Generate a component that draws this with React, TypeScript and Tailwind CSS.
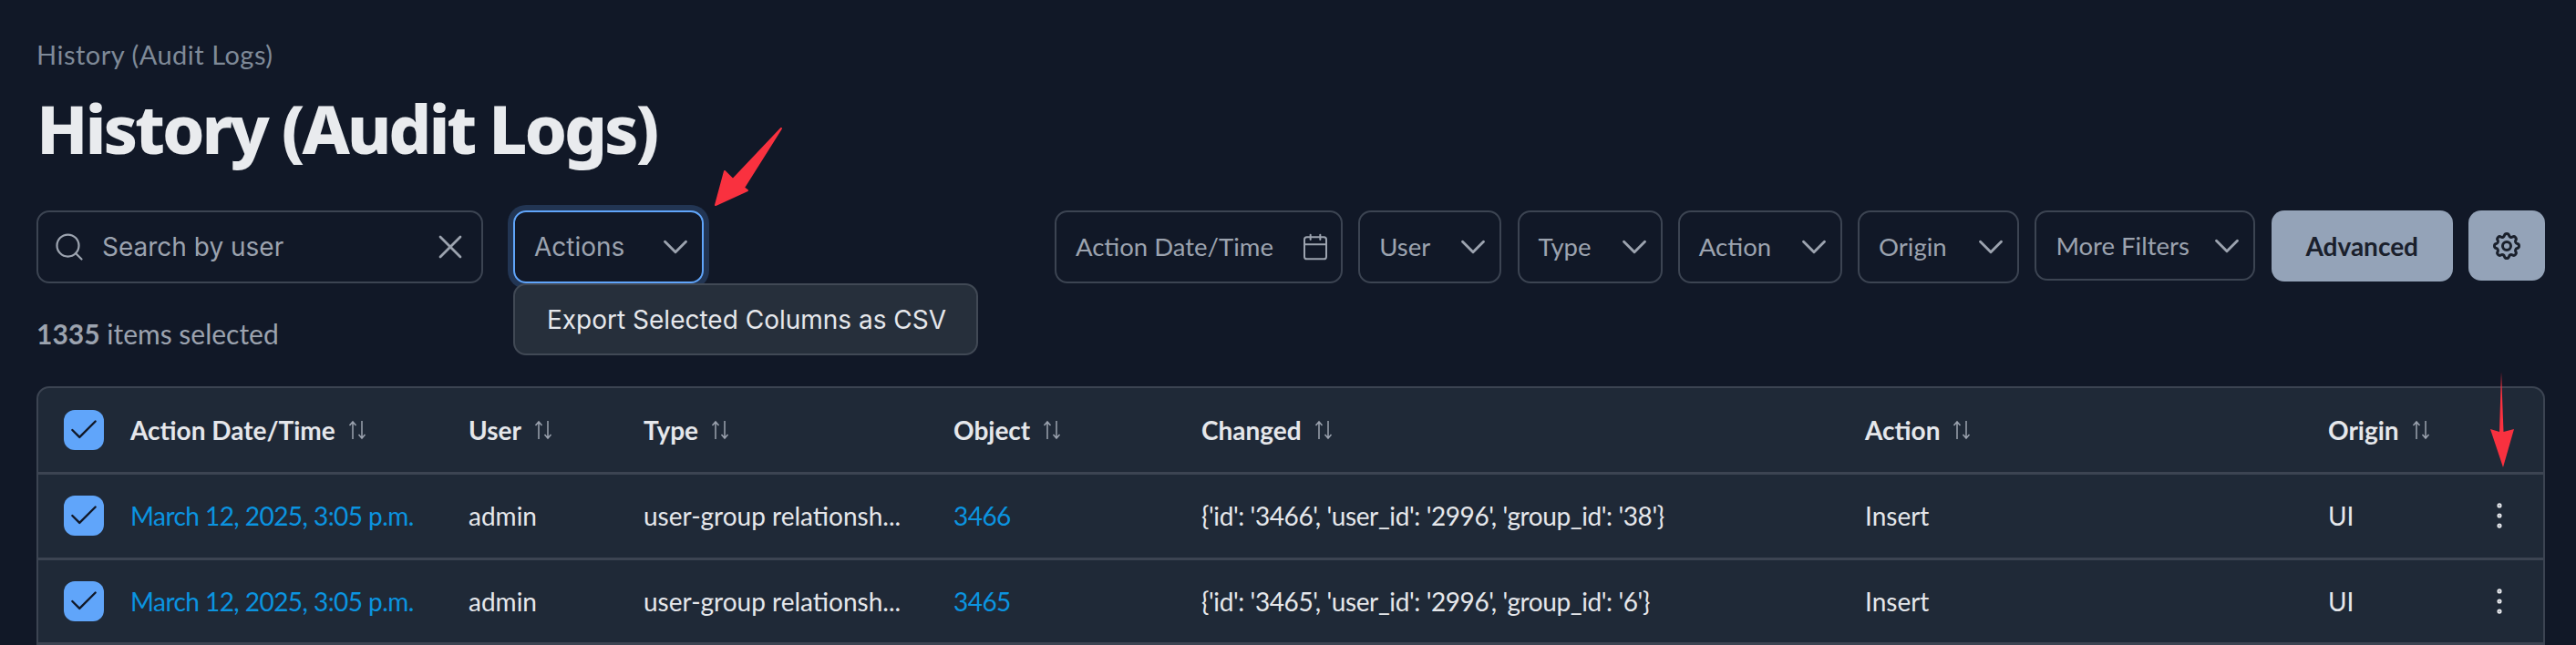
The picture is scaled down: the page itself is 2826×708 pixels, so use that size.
import React from 'react';
import { Calendar, Check, ChevronDown, EllipsisVertical, Search, X } from 'lucide-react';
import { HiOutlineCog } from 'react-icons/hi';

// ---- table data ----
const columns = [
  { label: 'Action Date/Time', width: 'w-[371px]' },
  { label: 'User', width: 'w-[192px]' },
  { label: 'Type', width: 'w-[340px]' },
  { label: 'Object', width: 'w-[272px]' },
  { label: 'Changed', width: 'w-[728px]' },
  { label: 'Action', width: 'w-[508px]' },
  { label: 'Origin', width: 'w-[168px]' },
];

const rows = [
  { id: '3466', changed: "{'id': '3466', 'user_id': '2996', 'group_id': '38'}" },
  { id: '3465', changed: "{'id': '3465', 'user_id': '2996', 'group_id': '6'}" },
];

const filters = [
  { label: 'User', width: 'w-[157px]' },
  { label: 'Type', width: 'w-[159px]' },
  { label: 'Action', width: 'w-[180px]' },
  { label: 'Origin', width: 'w-[177px]' },
];

function RowCheckbox() {
  return (
    <div className="w-[44px] h-[44px] shrink-0 rounded-[12px] bg-[#60a5fa] flex items-center justify-center">
      <Check className="w-[38px] h-[38px] text-[#111827]" strokeWidth={1.5} />
    </div>
  );
}

// thin up/down pair next to the column titles
function SortIcon() {
  return (
    <svg className="w-[20px] h-[22px] text-[#9ca3af]" viewBox="0 0 20 22" fill="none" stroke="currentColor" strokeWidth="1.5">
      <path d="M5 21V2M1.5 6L5 2l3.5 4" />
      <path d="M15 1v19M11.5 16l3.5 4 3.5-4" />
    </svg>
  );
}

function FilterSelect({ label, width }: { label: string; width: string }) {
  return (
    <div className={`${width} h-[80px] rounded-[14px] border-2 border-[#3c4452] flex items-center justify-between pl-[21px] pr-[6px] text-[#9ca3af]`}>
      <span>{label}</span>
      <ChevronDown className="w-[46px] h-[46px]" strokeWidth={1.5} />
    </div>
  );
}

export default function App() {
  return (
    <div className="relative h-[708px] overflow-hidden bg-[#111827] pl-[40px] pr-[34px] text-[28px] font-['Lato',sans-serif]">
      {/* Page header */}
      <div className="pt-[42px] h-[92px] text-[#7f8a98] text-[29px] tracking-[0.5px] leading-[36px]">History (Audit Logs)</div>
      <h1 className="h-[139px] text-[74px] leading-[97px] tracking-[-3.1px] font-extrabold text-[#e9ebee] font-['Noto_Sans',sans-serif]">History (Audit Logs)</h1>

      {/* Toolbar */}
      <div className="flex items-start justify-between">
        <div className="flex items-start gap-[33px] font-['Inter',sans-serif]">
          <div className="w-[490px] h-[80px] rounded-[14px] border-2 border-[#3c4452] flex items-center pl-[16px] pr-[12px] text-[#9ca3af]">
            <Search className="w-[36px] h-[36px] shrink-0" strokeWidth={1.5} />
            <span className="ml-[18px] flex-1">Search by user</span>
            <X className="w-[44px] h-[44px]" strokeWidth={1.5} />
          </div>
          <div className="relative">
            <div className="w-[209px] h-[80px] rounded-[14px] border-2 border-[#60a5fa] ring-[6px] ring-[#223553] flex items-center justify-between pl-[21px] pr-[6px] text-[#9ca3af]">
              <span>Actions</span>
              <ChevronDown className="w-[46px] h-[46px]" strokeWidth={1.5} />
            </div>
            <div className="absolute left-0 top-[80px] w-[510px] h-[79px] rounded-[14px] border-2 border-[#414955] bg-[#262f3b] flex items-center pl-[35px] text-[#e5e7eb] whitespace-nowrap z-10">
              Export Selected Columns as CSV
            </div>
          </div>
        </div>

        <div className="flex items-start gap-[17.3px] text-[27.5px]">
          <div className="w-[316px] h-[80px] rounded-[14px] border-2 border-[#3c4452] flex items-center justify-between pl-[21px] pr-[12px] text-[#9ca3af]">
            <span>Action Date/Time</span>
            <Calendar className="w-[32px] h-[32px]" strokeWidth={1.5} />
          </div>
          {filters.map((f) => (
            <FilterSelect key={f.label} label={f.label} width={f.width} />
          ))}
          <div className="w-[242px] h-[77px] rounded-[14px] border-2 border-[#3c4452] flex items-center justify-between pl-[21px] pr-[6px] text-[#9ca3af]">
            <span>More Filters</span>
            <ChevronDown className="w-[46px] h-[46px]" strokeWidth={1.5} />
          </div>
          <div className="w-[199px] h-[78px] rounded-[14px] bg-[#94a3b8] flex items-center justify-center text-[#1a202c] text-[28px] font-bold">Advanced</div>
          <div className="w-[84px] h-[77px] rounded-[14px] bg-[#94a3b8] flex items-center justify-center text-[#1a202c]">
            <HiOutlineCog className="w-[36px] h-[36px]" />
          </div>
        </div>
      </div>

      {/* Selection count */}
      <div className="mt-[35px] h-[40px] leading-[40px] text-[30px] text-[#9ca3af]">
        <span className="font-bold">1335</span> items selected
      </div>

      {/* Table */}
      <div className="mt-[38px] rounded-t-[14px] border-2 border-[#3c4452] bg-[#1f2937]">
        <div className="h-[95px] flex items-center pl-[28px] border-b-[3px] border-[#3c4452]">
          <RowCheckbox />
          <div className="ml-[29px] flex items-center">
            {columns.map((c) => (
              <div key={c.label} className={`${c.width} flex items-center gap-[14px] font-bold text-[#e5e7eb]`}>
                <span>{c.label}</span>
                <SortIcon />
              </div>
            ))}
          </div>
        </div>
        {rows.map((r) => (
          <div key={r.id} className="h-[93.5px] flex items-center pl-[28px] border-b-[3px] border-[#3c4452] text-[#e5e7eb]">
            <RowCheckbox />
            <div className="ml-[29px] flex items-center flex-1">
              <div className="w-[371px] text-[#0b94e0] tracking-[-0.55px]">March 12, 2025, 3:05 p.m.</div>
              <div className="w-[192px]">admin</div>
              <div className="w-[340px]">user-group relationsh...</div>
              <div className="w-[272px] text-[#0b94e0] tracking-[-0.55px]">{r.id}</div>
              <div className="w-[728px] tracking-[-0.4px]">{r.changed}</div>
              <div className="w-[508px]">Insert</div>
              <div className="w-[169px]">UI</div>
              <EllipsisVertical className="w-[38px] h-[38px] text-[#e5e7eb]" strokeWidth={1.25} />
            </div>
          </div>
        ))}
      </div>

      {/* Red annotation arrows */}
      <svg className="absolute left-[770px] top-[130px] w-[100px] h-[110px]" viewBox="0 0 100 110">
        <path d="M15 95 L25 58 L34 67 L87 11 L46 76 L50 79 Z" fill="#f9313f" stroke="#f9313f" strokeWidth="2" strokeLinejoin="round" />
      </svg>
      <svg className="absolute left-[2725px] top-[405px] w-[40px] h-[112px]" viewBox="0 0 40 112">
        <path d="M19 3 L21.5 69 L33 66 L21 108 L7 66 L17 69 Z" fill="#f9313f" />
      </svg>
    </div>
  );
}
